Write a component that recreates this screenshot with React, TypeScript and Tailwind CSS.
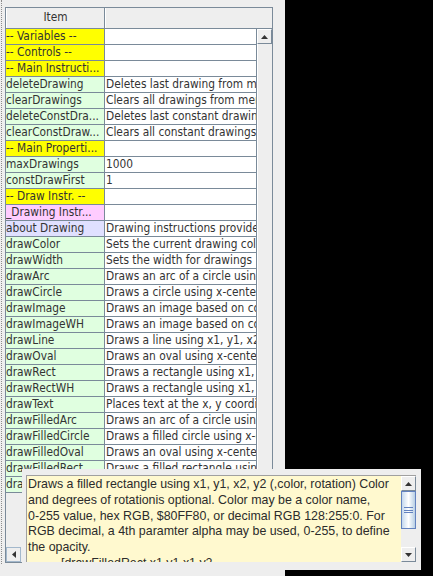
import React from 'react';

type Row = { name: string; desc: string; bg: string };

const Y = 'bg-[#ffff00]';
const G = 'bg-[#e0ffe0]';

const rows: Row[] = [
  { name: '-- Variables --', desc: '', bg: Y },
  { name: '-- Controls --', desc: '', bg: Y },
  { name: '-- Main Instructi...', desc: '', bg: Y },
  { name: 'deleteDrawing', desc: 'Deletes last drawing from memory', bg: G },
  { name: 'clearDrawings', desc: 'Clears all drawings from memory', bg: G },
  { name: 'deleteConstDra...', desc: 'Deletes last constant drawing from memory', bg: G },
  { name: 'clearConstDraw...', desc: 'Clears all constant drawings from memory', bg: G },
  { name: '-- Main Properti...', desc: '', bg: Y },
  { name: 'maxDrawings', desc: '1000', bg: G },
  { name: 'constDrawFirst', desc: '1', bg: G },
  { name: '-- Draw Instr. --', desc: '', bg: Y },
  { name: '_Drawing Instr...', desc: '', bg: 'bg-[#ffccff]' },
  { name: 'about Drawing', desc: 'Drawing instructions provide a way to draw', bg: 'bg-[#e0e0ff]' },
  { name: 'drawColor', desc: 'Sets the current drawing color', bg: G },
  { name: 'drawWidth', desc: 'Sets the width for drawings', bg: G },
  { name: 'drawArc', desc: 'Draws an arc of a circle using', bg: G },
  { name: 'drawCircle', desc: 'Draws a circle using x-center, y-center', bg: G },
  { name: 'drawImage', desc: 'Draws an image based on coordinates', bg: G },
  { name: 'drawImageWH', desc: 'Draws an image based on coordinates', bg: G },
  { name: 'drawLine', desc: 'Draws a line using x1, y1, x2, y2', bg: G },
  { name: 'drawOval', desc: 'Draws an oval using x-center, y-center', bg: G },
  { name: 'drawRect', desc: 'Draws a rectangle using x1, y1, x2, y2', bg: G },
  { name: 'drawRectWH', desc: 'Draws a rectangle using x1, y1, width', bg: G },
  { name: 'drawText', desc: 'Places text at the x, y coordinates', bg: G },
  { name: 'drawFilledArc', desc: 'Draws an arc of a circle using', bg: G },
  { name: 'drawFilledCircle', desc: 'Draws a filled circle using x-center', bg: G },
  { name: 'drawFilledOval', desc: 'Draws an oval using x-center, y-center', bg: G },
  { name: 'drawFilledRect', desc: 'Draws a filled rectangle using', bg: G },
  { name: 'drawFilledRectWH', desc: 'Draws a filled rectangle using', bg: G },
];

const tipLines = [
  'Draws a filled rectangle using x1, y1, x2, y2 (,color, rotation) Color',
  'and degrees of rotationis optional. Color may be a color name,',
  '0-255 value, hex RGB, $80FF80, or decimal RGB 128:255:0. For',
  'RGB decimal, a 4th paramter alpha may be used, 0-255, to define',
  'the opacity.',
];

const tableFont = { fontFamily: '"DejaVu Sans Condensed", "DejaVu Sans", sans-serif' };

function Arrow({ dir }: { dir: 'up' | 'down' | 'left' }) {
  const pts = dir === 'up' ? '0,4 3.5,0 7,4' : dir === 'down' ? '0,0 3.5,4 7,0' : '4,0 0,3.5 4,7';
  const w = dir === 'left' ? 4 : 7;
  const h = dir === 'left' ? 7 : 4;
  return (
    <svg width={w} height={h} viewBox={`0 0 ${w} ${h}`}>
      <polygon points={pts} fill="#333333" />
    </svg>
  );
}

function ScrollButton({ dir }: { dir: 'up' | 'down' | 'left' }) {
  return (
    <div className="w-[15px] h-[15px] shrink-0 flex items-center justify-center bg-[#eeeeee] border border-[#7a8a99] border-t-white border-l-white">
      <Arrow dir={dir} />
    </div>
  );
}

export default function App() {
  return (
    <div className="relative w-[433px] h-[576px] bg-black flex overflow-hidden">
      {/* window panel */}
      <div className="w-[285px] h-full bg-[#eeeeee] flex pl-[1px]">
        <div className="w-px h-[564px] border-l border-dotted border-[#8c8c8c]" />
        <div
          className="ml-[3px] mt-[7px] w-[268px] h-[556px] border border-[#7a8a99] flex flex-col text-[#333333] text-[11.8px]"
          style={tableFont}
        >
          {/* header */}
          <div className="h-[21px] shrink-0 flex border-b border-[#7a8a99] bg-[#eeeeee]">
            <div className="w-[99px] border-r border-[#7a8a99] border-l border-l-white flex items-center justify-center">
              Item
            </div>
            <div className="flex-1 border-l border-white" />
          </div>

          {/* body */}
          <div className="flex-1 flex min-h-0">
            <div className="w-[250px] overflow-hidden">
              {rows.map((r) => (
                <div key={r.name} className="h-[16px] flex border-b border-[#7a8a99] leading-[15px]">
                  <div className={`w-[99px] shrink-0 border-r border-[#7a8a99] whitespace-nowrap overflow-hidden ${r.bg}`}>
                    {r.name}
                  </div>
                  <div className="flex-1 bg-white pl-[1px] whitespace-nowrap overflow-hidden">{r.desc}</div>
                </div>
              ))}
            </div>
            <div className="w-[16px] border-l border-[#7a8a99] flex flex-col bg-[#eeeeee]">
              <ScrollButton dir="up" />
              <div className="flex-1 border-l border-white" />
            </div>
          </div>

          {/* horizontal scrollbar */}
          <div className="h-[15px] shrink-0 flex">
            <div className="w-[15px] h-[15px] flex items-center justify-center bg-[#eeeeee] border border-[#a3b8cc]">
              <Arrow dir="left" />
            </div>
            <div className="flex-1" />
          </div>
        </div>
      </div>

      {/* tooltip popup */}
      <div className="absolute left-[22px] top-[469px] w-[399px] h-[101px] bg-[#eeeeee] pt-[6px] pl-[4px] pr-[5px] pb-[8px]">
        <div className="h-full flex border-l border-t border-[#a0a0a0]">
          <div
            className="flex-1 bg-[#fff9cf] overflow-hidden pl-[1px] pt-[1px] text-[12.4px] leading-[15.8px] text-[#2b2b2b] whitespace-nowrap"
            style={{ fontFamily: '"Liberation Sans", Arial, sans-serif' }}
          >
            {tipLines.map((l) => (
              <div key={l}>{l}</div>
            ))}
            <div className="pl-[33px]">[drawFilledRect x1 y1 x1 y2</div>
          </div>
          <div className="w-[15px] flex flex-col bg-[#eeeeee]">
            <ScrollButton dir="up" />
            <div className="h-[38px] border border-[#6382bf] bg-linear-to-r from-[#c4d8ee] via-white to-[#b8cfe5] flex flex-col items-center justify-center gap-[1.5px]">
              <div className="w-[9px] h-px bg-[#6382bf]" />
              <div className="w-[9px] h-px bg-[#6382bf]" />
              <div className="w-[9px] h-px bg-[#6382bf]" />
            </div>
            <div className="flex-1" />
            <ScrollButton dir="down" />
          </div>
        </div>
      </div>
    </div>
  );
}
